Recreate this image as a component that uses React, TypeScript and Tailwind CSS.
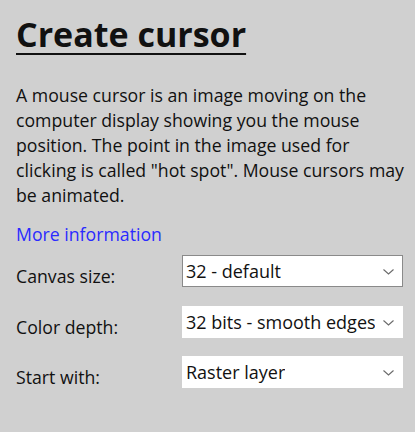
interface Field {
  label: string
  value: string
  focused?: boolean
}

const fields: Field[] = [
  { label: 'Canvas size:', value: '32 - default', focused: true },
  { label: 'Color depth:', value: '32 bits - smooth edges' },
  { label: 'Start with:', value: 'Raster layer' }
]

function Select({ value, focused }: { value: string; focused?: boolean }) {
  return (
    <div
      className={`relative flex h-[32px] w-[221px] shrink-0 items-center bg-white pl-[3px] pr-[27px] ${
        focused ? 'border border-[#8a8a8a]' : 'border border-white'
      }`}
    >
      <span className="overflow-hidden whitespace-nowrap text-[18px] leading-[24px] text-[#111]">{value}</span>
      <svg className="absolute right-[8px] top-[13px]" width="11" height="6" viewBox="0 0 11 6" fill="none">
        <polyline points="0.5,0.5 5.5,5 10.5,0.5" stroke="#6a6a6a" strokeWidth="1.1" />
      </svg>
    </div>
  )
}

export default function App() {
  return (
    <div
      className="h-[432px] w-[415px] bg-[#d0d0d0] pl-4 pt-[14px] text-[#111]"
      style={{ fontFamily: '"Open Sans", "Noto Sans", sans-serif' }}
    >
      <h1 className="text-[34px] font-bold leading-[40px] underline decoration-2 underline-offset-[6px]">
        Create cursor
      </h1>
      <p className="mt-[29px] whitespace-nowrap text-[17.7px] leading-[25px]">
        A mouse cursor is an image moving on the
        <br />
        computer display showing you the mouse
        <br />
        position. The point in the image used for
        <br />
        clicking is called "hot spot". Mouse cursors may
        <br />
        be animated.
      </p>
      <a href="#" className="mt-[14px] block text-[17.7px] leading-[25px] text-[#2a2aff]">
        More information
      </a>
      <div className="mt-[8px] flex flex-col gap-[18.5px]">
        {fields.map((f) => (
          <div key={f.label} className="flex h-[32px] items-start">
            <span className="w-[166px] shrink-0 pt-[10px] text-[17.7px] leading-[22px]">{f.label}</span>
            <Select value={f.value} focused={f.focused} />
          </div>
        ))}
      </div>
    </div>
  )
}
